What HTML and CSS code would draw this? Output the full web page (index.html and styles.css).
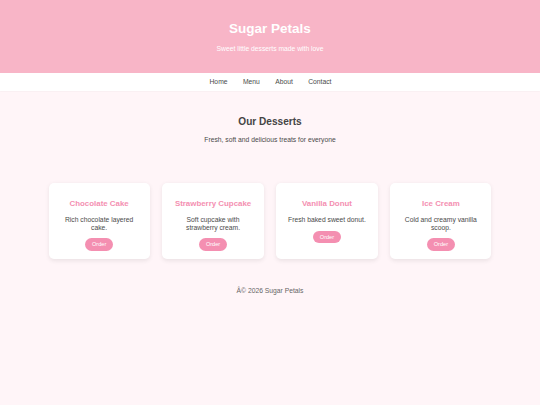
FILE: index.html
```html
<!DOCTYPE html>
<html lang="en">
<head>
<meta charset="utf-8">
<title>Sugar Petals</title>
<link rel="stylesheet" href="styles.css">
</head>
<body>
<header class="site-header">
  <h1 class="brand">Sugar Petals</h1>
  <p class="tagline">Sweet little desserts made with love</p>
</header>
<nav class="site-nav">
  <a href="#">Home</a>
  <a href="#">Menu</a>
  <a href="#">About</a>
  <a href="#">Contact</a>
</nav>
<main class="content">
  <h2 class="section-title">Our Desserts</h2>
  <p class="section-sub">Fresh, soft and delicious treats for everyone</p>
  <div class="cards">
    <div class="card">
      <h3>Chocolate Cake</h3>
      <p>Rich chocolate layered cake.</p>
      <button class="order">Order</button>
    </div>
    <div class="card">
      <h3>Strawberry Cupcake</h3>
      <p>Soft cupcake with strawberry cream.</p>
      <button class="order">Order</button>
    </div>
    <div class="card">
      <h3>Vanilla Donut</h3>
      <p>Fresh baked sweet donut.</p>
      <button class="order">Order</button>
    </div>
    <div class="card">
      <h3>Ice Cream</h3>
      <p>Cold and creamy vanilla scoop.</p>
      <button class="order">Order</button>
    </div>
  </div>
</main>
<footer class="site-footer">Â© 2026 Sugar Petals</footer>
</body>
</html>
```
FILE: styles.css
```css
html, body {
  margin: 0;
  padding: 0;
}
body {
  background: #fff5f8;
  font-family: "Liberation Sans", Arial, sans-serif;
  font-size: 6.75px;
  line-height: 1.15;
  color: #4a4a4a;
  min-height: 405px;
}
.site-header {
  background: #f8b5c7;
  color: #fff;
  text-align: center;
  padding: 21px 0 20px;
  height: 73px;
  box-sizing: border-box;
}
.brand {
  margin: 0;
  font-size: 13.5px;
  line-height: 15.5px;
  font-weight: bold;
}
.tagline {
  margin: 8.4px 0 0;
  font-size: 6.75px;
  line-height: 7.76px;
  color: #fff;
}
.site-nav {
  background: #fff;
  height: 18px;
  box-sizing: border-box;
  display: flex;
  justify-content: center;
  align-items: center;
  gap: 15.4px;
  box-shadow: 0 0.5px 1.5px rgba(0,0,0,0.06);
  padding-left: 1px;
}
.site-nav a {
  color: #4a4a4a;
  text-decoration: none;
  font-size: 6.75px;
  line-height: 7.76px;
}
.content {
  text-align: center;
  padding-top: 25.3px;
}
.section-title {
  margin: 0;
  font-size: 10.1px;
  line-height: 11.6px;
  font-weight: bold;
  color: #444;
}
.section-sub {
  margin: 8.4px 0 0;
  line-height: 7.76px;
  color: #4a4a4a;
}
.cards {
  display: flex;
  justify-content: center;
  gap: 12.66px;
  margin-top: 39.2px;
}
.card {
  width: 101.25px;
  box-sizing: border-box;
  background: #fff;
  border-radius: 5px;
  padding: 0 8.44px 8.44px;
  box-shadow: 0 1.2px 4px rgba(0,0,0,0.08);
  text-align: center;
}
.card h3 {
  margin: 15.8px 0 7.9px;
  font-size: 7.9px;
  line-height: 9.07px;
  color: #f48fb1;
  font-weight: bold;
}
.card p {
  margin: 0 0 6.75px;
  line-height: 7.76px;
  color: #4a4a4a;
}
.order {
  font-family: "Liberation Sans", Arial, sans-serif;
  font-size: 5.6px;
  line-height: 6.4px;
  border: none;
  background: #f48fb1;
  color: #fff;
  border-radius: 8px;
  padding: 3.15px 6.75px;
  margin: 0;
  cursor: pointer;
}
.site-footer {
  text-align: center;
  margin-top: 27.8px;
  line-height: 7.76px;
  color: #666;
}
```
